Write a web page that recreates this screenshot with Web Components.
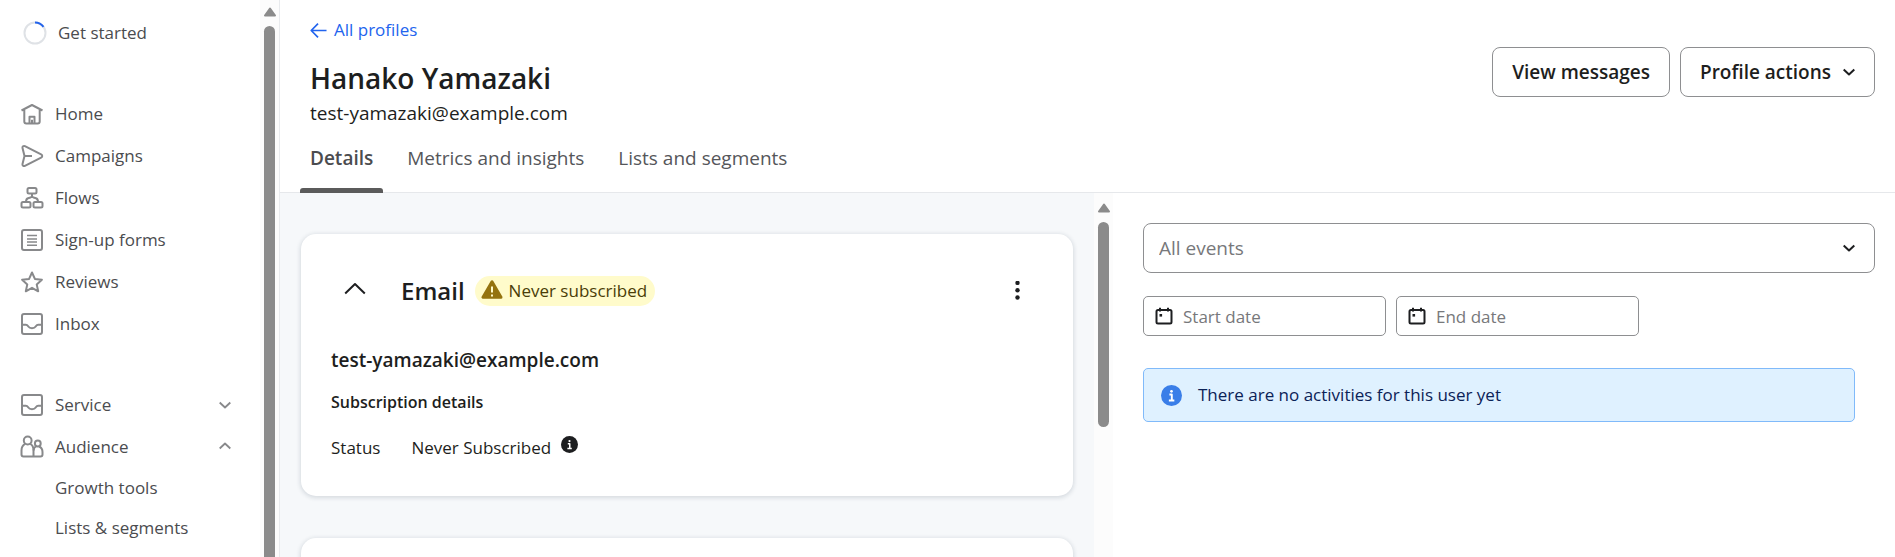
<!DOCTYPE html>
<html lang="en">
<head>
<meta charset="utf-8">
<title>Hanako Yamazaki</title>
<style>
	body {
		margin: 0;
		background: #fff;
		color: #1d1e20;
		font-family: "Open Sans", "Noto Sans", sans-serif;
		font-size: 17px;
		line-height: 24px;
	}
</style>
</head>
<body>
<profile-page>
	<side-nav slot="nav">
		<nav-progress>Get started</nav-progress>
		<nav-group>
			<nav-item icon="home">Home</nav-item>
			<nav-item icon="campaigns">Campaigns</nav-item>
			<nav-item icon="flows">Flows</nav-item>
			<nav-item icon="forms">Sign-up forms</nav-item>
			<nav-item icon="star">Reviews</nav-item>
			<nav-item icon="inbox">Inbox</nav-item>
		</nav-group>
		<nav-group>
			<nav-item icon="inbox" toggle="chevron-down">Service</nav-item>
			<nav-item icon="people" toggle="chevron-up">Audience</nav-item>
			<nav-item sub>Growth tools</nav-item>
			<nav-item sub>Lists &amp; segments</nav-item>
		</nav-group>
	</side-nav>

	<profile-header slot="header">
		<span slot="name">Hanako Yamazaki</span>
		<span slot="email">test-yamazaki@example.com</span>
		<action-button slot="actions">View messages</action-button>
		<action-button slot="actions" menu>Profile actions</action-button>
		<tab-link slot="tabs" active>Details</tab-link>
		<tab-link slot="tabs">Metrics and insights</tab-link>
		<tab-link slot="tabs">Lists and segments</tab-link>
	</profile-header>

	<channel-card slot="details">
		<span slot="title">Email</span>
		<status-badge slot="badge">Never subscribed</status-badge>
		<span slot="address">test-yamazaki@example.com</span>
		<span slot="subtitle">Subscription details</span>
		<span slot="label">Status</span>
		<span slot="value">Never Subscribed</span>
	</channel-card>
	<blank-card slot="details"></blank-card>

	<event-filter slot="activity"></event-filter>
	<info-banner slot="activity">There are no activities for this user yet</info-banner>
</profile-page>

<script>
const ICONS = {
	home: {
		box: 24,
		body: `<path d="M1.500 8.500 12 3l10.500 5.500M4.300 7.300v12.200a2 2 0 0 0 2 2h11.400a2 2 0 0 0 2-2V7.300"/><path d="M9.500 21.500v-6.800h5v6.800M12 17.800v3.500"/>`
	},
	campaigns: {
		box: 24,
		body: `<path d="M2.500 4.100c-.4-1.500 1-2.600 2.400-2l16.200 8.200c1.500.8 1.500 2.600 0 3.400L4.900 21.900c-1.400.6-2.800-.5-2.400-2L4.500 12z"/><path d="M4.500 12h7.500"/>`
	},
	flows: {
		box: 24,
		body: `<rect x="7.500" y="2" width="9" height="5.500" rx="1.500"/><rect x="1.500" y="16" width="9" height="5.500" rx="1.500"/><rect x="13.500" y="16" width="9" height="5.500" rx="1.500"/><path d="M12 7.500v2.500c0 1-.6 1.300-1.500 1.500l-2.500.7C6.500 12.600 6 13.500 6 16M12 10c0 1 .6 1.300 1.500 1.500l2.500.7c1.500.4 2 1.300 2 3.800"/>`
	},
	forms: {
		box: 24,
		body: `<rect x="2" y="2" width="20" height="20" rx="2"/><path d="M7 7.500h10M7 11h10M7 14h10M7 17.200h10" stroke-width="1.500"/>`
	},
	star: {
		box: 24,
		body: `<path d="m12 2.500 2.900 6.400 7 .8-5.200 4.700 1.500 6.900L12 17.800l-6.200 3.500 1.500-6.900L2.100 9.700l7-.8z"/>`
	},
	inbox: {
		box: 24,
		body: `<rect x="2" y="2" width="20" height="20" rx="2"/><path d="M2.300 12.800h3.500c1.500 0 1.900.8 2.500 1.700.7 1.100 1.700 1.700 3.700 1.700s3-.6 3.700-1.700c.6-.9 1-1.700 2.500-1.700h3.500"/>`
	},
	people: {
		box: 24,
		body: `<circle cx="7.700" cy="5.500" r="3.900"/><path d="M5.200 8.800C2.600 10 1.500 12.500 1.500 15.500v4a2 2 0 0 0 2 2h17a2 2 0 0 0 2-2V17c0-2.500-1.300-4.600-3.400-5.500M10.200 8.800c2.600 1.200 3.300 3.700 3.300 6.700v6"/><circle cx="17.800" cy="8.500" r="2.900"/><path d="M16.200 11.200c-1.500.7-2.400 2.300-2.700 4.300"/>`
	},
	'chevron-down': { box: 12, body: `<path d="m.7 3.500 5.300 5 5.300-5"/>` },
	'chevron-up': { box: 12, body: `<path d="m.7 7.500 5.300-5 5.300 5"/>` },
	arrow: { box: 18, body: `<path d="M17.500 9H1.500M8.500 1.700 1.300 9l7.200 7.300"/>` },
	collapse: { box: 22, body: `<path d="M1.200 13.500 11 4l9.800 9.500"/>` },
	dots: {
		box: 20,
		body: `<g fill="currentColor" stroke="none"><circle cx="10.500" cy="1.900" r="2.200"/><circle cx="10.500" cy="9.200" r="2.200"/><circle cx="10.500" cy="16.500" r="2.200"/></g>`
	},
	warning: {
		box: 22,
		body: `<path d="M11 1.700 2 17.200h18z" fill="currentColor" stroke-linejoin="round" stroke-width="3"/><path d="M11 6.500v6M11 14.600v2" stroke="#fffbcb" stroke-width="2"/>`
	},
	info: {
		box: 20,
		body: `<circle cx="10" cy="10" r="10" fill="currentColor" stroke="none"/><path d="M8 9h2.300v5.500M7.500 14.700h5.200" stroke="#fff" stroke-width="1.800"/><circle cx="10" cy="6" r="1.300" fill="#fff" stroke="none"/>`
	},
	calendar: {
		box: 18,
		body: `<rect x="1.500" y="3" width="15" height="13.500" rx="1.500"/><path d="M5 .8v3.700M13 .8v3.700"/><path d="M4.500 7h2.600v2.600H4.500z" fill="currentColor" stroke="none"/>`
	},
	up: {
		box: 14,
		body: `<path d="M7 3.500 2 10.500h10z" fill="currentColor" stroke-linejoin="round" stroke-width="2"/>`
	}
};

function icon(name, size, weight = 2) {
	const { box, body } = ICONS[name];
	return `<svg class="icon" width="${size}" height="${size}" viewBox="0 0 ${box} ${box}" fill="none" stroke="currentColor" stroke-width="${weight}" stroke-linejoin="round" aria-hidden="true">${body}</svg>`;
}

const BASE_STYLE = `
	* { box-sizing: border-box; }
	.icon { display: block; flex: none; }
	button, input, select { font: inherit; color: inherit; margin: 0; }
	button { background: none; border: 0; padding: 0; cursor: pointer; }
	a { color: inherit; text-decoration: none; }
`;

class BaseElement extends HTMLElement {
	constructor() {
		super();
		this.attachShadow({ mode: 'open' });
	}

	connectedCallback() {
		const template = document.createElement('template');
		template.innerHTML = `<style>${BASE_STYLE}${this.styles()}</style>${this.markup()}`;
		this.shadowRoot.replaceChildren(template.content.cloneNode(true));
	}

	styles() { return ''; }
	markup() { return '<slot></slot>'; }
}

class ProfilePage extends BaseElement {
	styles() {
		return `
			:host {
				display: grid;
				grid-template-columns: 280px minmax(0, 1fr);
				height: 100vh;
				overflow: hidden;
			}
			main {
				display: flex;
				flex-direction: column;
				min-height: 0;
			}
			.panes {
				flex: 1;
				min-height: 0;
				display: grid;
				grid-template-columns: minmax(0, 833fr) minmax(0, 782fr);
			}
			.details {
				display: flex;
				min-height: 0;
				background: #f6f8fa;
			}
			.cards {
				flex: 1;
				min-width: 0;
				overflow: hidden;
				display: flex;
				flex-direction: column;
				gap: 42px;
				padding: 41px 21px 0;
			}
			.activity {
				padding: 30px 20px 0 30px;
			}
		`;
	}

	markup() {
		return `
			<slot name="nav"></slot>
			<main>
				<slot name="header"></slot>
				<div class="panes">
					<section class="details">
						<div class="cards"><slot name="details"></slot></div>
						<scroll-rail thumb="205px"></scroll-rail>
					</section>
					<section class="activity"><slot name="activity"></slot></section>
				</div>
			</main>
		`;
	}
}

class ScrollRail extends BaseElement {
	styles() {
		return `
			:host {
				flex: none;
				width: 19px;
				display: flex;
				flex-direction: column;
				align-items: center;
				gap: 7px;
				padding-top: 8px;
				background: #fcfcfc;
				color: #8b8b8b;
			}
			:host([flush]) { padding-top: 5px; }
			.thumb {
				flex: 0 1 ${this.getAttribute('thumb')};
				width: 11px;
				border-radius: 6px;
				background: #8b8b8b;
			}
			:host([flush]) .thumb { border-radius: 6px 6px 0 0; }
		`;
	}

	markup() {
		return `${icon('up', 14)}<div class="thumb"></div>`;
	}
}

class SideNav extends BaseElement {
	styles() {
		return `
			:host {
				display: flex;
				min-height: 0;
				border-right: 1px solid #e8eaed;
				color: #4b4c4f;
			}
			nav {
				flex: 1;
				overflow: hidden;
				display: flex;
				flex-direction: column;
				gap: 39px;
				padding: 12px 29px 0 20px;
			}
		`;
	}

	markup() {
		return `<nav><slot></slot></nav><scroll-rail flush thumb="100%"></scroll-rail>`;
	}
}

class NavProgress extends BaseElement {
	styles() {
		return `
			:host { display: block; }
			a {
				display: flex;
				align-items: center;
				gap: 11px;
				height: 42px;
				padding-left: 3px;
			}
		`;
	}

	markup() {
		return `
			<a href="#">
				<svg class="icon" width="24" height="24" viewBox="0 0 24 24" fill="none" stroke-width="2" aria-hidden="true">
					<circle cx="12" cy="12" r="10.500" stroke="#dfe2e6"/>
					<path d="M12 1.500A10.500 10.500 0 0 1 20.500 5.800" stroke="#2363eb"/>
				</svg>
				<slot></slot>
			</a>
		`;
	}
}

class NavGroup extends BaseElement {
	styles() {
		return `:host { display: block; }`;
	}
}

class NavItem extends BaseElement {
	styles() {
		return `
			:host { display: block; }
			a {
				display: flex;
				align-items: center;
				gap: 11px;
				height: 42px;
			}
			.text { flex: 1; }
			.icon { color: #88898b; }
			:host([sub]) a {
				height: 40px;
				padding-left: 35px;
			}
		`;
	}

	markup() {
		const name = this.getAttribute('icon');
		const toggle = this.getAttribute('toggle');
		return `
			<a href="#">
				${name ? icon(name, 24) : ''}
				<span class="text"><slot></slot></span>
				${toggle ? icon(toggle, 12, 1.8) : ''}
			</a>
		`;
	}
}

class ProfileHeader extends BaseElement {
	styles() {
		return `
			:host {
				display: block;
				padding: 18px 20px 0;
				border-bottom: 1px solid #e6e8eb;
			}
			.top {
				display: flex;
				align-items: center;
				justify-content: space-between;
			}
			.intro { padding-left: 10px; }
			.back {
				display: flex;
				align-items: center;
				gap: 7px;
				width: fit-content;
				color: #2264ee;
			}
			h1 {
				margin: 18px 0 4px;
				font-size: 28px;
				line-height: 36px;
				font-weight: 600;
			}
			.email {
				font-size: 19px;
				line-height: 26px;
			}
			.actions {
				display: flex;
				gap: 10px;
			}
			.tabs {
				display: flex;
				gap: 14px;
				margin: 20px 0 -1px;
			}
		`;
	}

	markup() {
		return `
			<div class="top">
				<div class="intro">
					<a class="back" href="#">${icon('arrow', 17, 1.8)}All profiles</a>
					<h1><slot name="name"></slot></h1>
					<div class="email"><slot name="email"></slot></div>
				</div>
				<div class="actions"><slot name="actions"></slot></div>
			</div>
			<nav class="tabs"><slot name="tabs"></slot></nav>
		`;
	}
}

class TabLink extends BaseElement {
	styles() {
		return `
			:host { display: block; }
			a {
				display: block;
				font-size: 19px;
				color: #55565a;
			}
			.text {
				display: block;
				padding: 0 10px 18px;
			}
			.bar {
				display: block;
				height: 5px;
				border-radius: 3px 3px 0 0;
			}
			:host([active]) .text {
				font-weight: 600;
				color: #4b4c4f;
			}
			:host([active]) .bar { background: #5b5b5b; }
		`;
	}

	markup() {
		return `<a href="#"><span class="text"><slot></slot></span><span class="bar"></span></a>`;
	}
}

class ActionButton extends BaseElement {
	styles() {
		return `
			:host { display: block; }
			button {
				display: flex;
				align-items: center;
				gap: 12px;
				height: 50px;
				padding: 0 19px;
				border: 1px solid #8e8f91;
				border-radius: 8px;
				background: #fff;
				font-size: 19px;
				font-weight: 600;
			}
		`;
	}

	markup() {
		return `<button type="button"><slot></slot>${this.hasAttribute('menu') ? icon('chevron-down', 12) : ''}</button>`;
	}
}

const CARD_STYLE = `
	:host {
		display: block;
		flex: none;
		border-radius: 15px;
		background: #fff;
		box-shadow: 0 1px 4px 1px rgba(30, 50, 70, .14);
	}
`;

class ChannelCard extends BaseElement {
	styles() {
		return `
			${CARD_STYLE}
			:host { padding: 42px 40px 36px 30px; }
			header {
				display: flex;
				align-items: center;
				height: 30px;
			}
			.toggle, .more {
				display: flex;
				justify-content: center;
				width: 48px;
			}
			.more {
				width: 32px;
				margin-left: auto;
			}
			h2 {
				margin: 0 10px 0 22px;
				font-size: 24px;
				line-height: 30px;
				font-weight: 600;
			}
			.address {
				margin: 41px 0 17px;
				font-size: 19px;
				line-height: 26px;
				font-weight: 600;
			}
			h3 {
				margin: 0 0 22px;
				font-size: 16px;
				line-height: 24px;
				font-weight: 600;
			}
			dl {
				display: flex;
				gap: 31px;
				margin: 0;
			}
			dd {
				display: flex;
				gap: 10px;
				margin: 0;
			}
		`;
	}

	markup() {
		return `
			<header>
				<button class="toggle" type="button" aria-label="Collapse">${icon('collapse', 22)}</button>
				<h2><slot name="title"></slot></h2>
				<slot name="badge"></slot>
				<button class="more" type="button" aria-label="More options">${icon('dots', 20)}</button>
			</header>
			<div class="address"><slot name="address"></slot></div>
			<h3><slot name="subtitle"></slot></h3>
			<dl>
				<dt><slot name="label"></slot></dt>
				<dd><slot name="value"></slot>${icon('info', 17)}</dd>
			</dl>
		`;
	}
}

class BlankCard extends BaseElement {
	styles() {
		return `
			${CARD_STYLE}
			:host { min-height: 262px; }
		`;
	}
}

class StatusBadge extends BaseElement {
	styles() {
		return `
			:host {
				display: flex;
				align-items: center;
				gap: 6px;
				height: 30px;
				padding: 0 8px 0 6px;
				border-radius: 15px;
				background: #fffbcb;
				color: #4a3d08;
			}
			.icon { color: #94730f; }
		`;
	}

	markup() {
		return `${icon('warning', 22)}<slot></slot>`;
	}
}

class EventFilter extends BaseElement {
	styles() {
		return `
			:host {
				display: block;
				color: #77787b;
			}
			.events, .date { display: grid; }
			.events > *, .date > * {
				grid-area: 1 / 1;
				align-self: center;
			}
			.icon {
				color: #1d1e20;
				pointer-events: none;
			}
			.events .icon {
				justify-self: end;
				margin-right: 20px;
			}
			.date .icon { margin-left: 12px; }
			select, input {
				width: 100%;
				border: 1px solid #8e8f91;
				background: #fff;
			}
			select {
				appearance: none;
				height: 50px;
				padding: 0 40px 0 15px;
				border-radius: 8px;
				font-size: 19px;
			}
			.dates {
				display: flex;
				gap: 10px;
				margin-top: 23px;
			}
			.date { flex: 0 1 243px; }
			input {
				height: 40px;
				padding: 0 12px 0 39px;
				border-radius: 5px;
			}
			input::placeholder { color: #77787b; }
		`;
	}

	markup() {
		return `
			<div class="events">
				<select aria-label="Events"><option>All events</option></select>
				${icon('chevron-down', 12)}
			</div>
			<div class="dates">
				<div class="date"><input type="text" aria-label="Start date" placeholder="Start date">${icon('calendar', 18)}</div>
				<div class="date"><input type="text" aria-label="End date" placeholder="End date">${icon('calendar', 18)}</div>
			</div>
		`;
	}
}

class InfoBanner extends BaseElement {
	styles() {
		return `
			:host {
				display: flex;
				align-items: center;
				gap: 16px;
				margin: 32px 20px 0 0;
				padding: 14px 17px;
				border: 1px solid #80bafa;
				border-radius: 5px;
				background: #dff1ff;
				color: #0b2257;
			}
			.icon { color: #3a7ee8; }
		`;
	}

	markup() {
		return `${icon('info', 21)}<slot></slot>`;
	}
}

customElements.define('scroll-rail', ScrollRail);
customElements.define('nav-progress', NavProgress);
customElements.define('nav-group', NavGroup);
customElements.define('nav-item', NavItem);
customElements.define('side-nav', SideNav);
customElements.define('tab-link', TabLink);
customElements.define('action-button', ActionButton);
customElements.define('profile-header', ProfileHeader);
customElements.define('status-badge', StatusBadge);
customElements.define('channel-card', ChannelCard);
customElements.define('blank-card', BlankCard);
customElements.define('event-filter', EventFilter);
customElements.define('info-banner', InfoBanner);
customElements.define('profile-page', ProfilePage);
</script>
</body>
</html>
